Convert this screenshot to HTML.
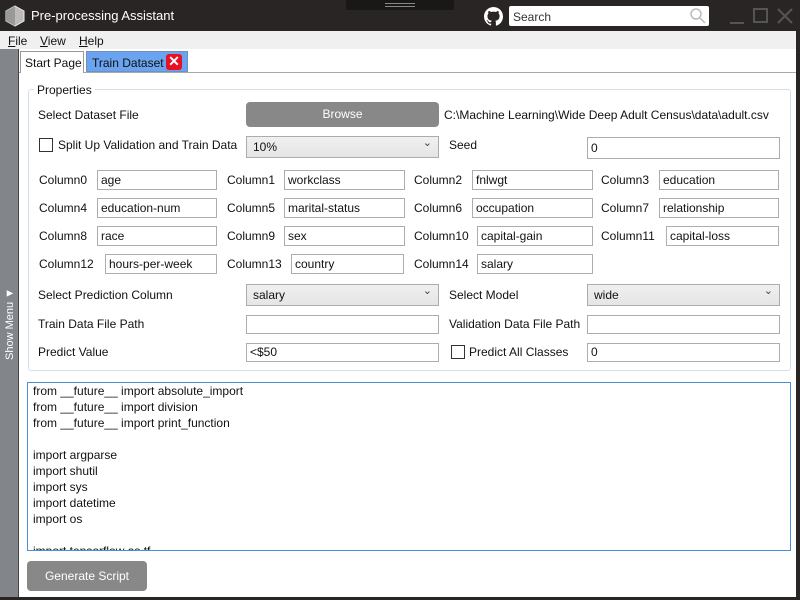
<!DOCTYPE html>
<html><head><meta charset="utf-8"><style>
*{box-sizing:border-box;margin:0;padding:0}
body{width:800px;height:600px;overflow:hidden;background:#fff;font-family:"Liberation Sans",sans-serif;font-size:12px;color:#111;position:relative}
div,span{position:absolute}
.l{white-space:nowrap;line-height:14px}
.i{border:1px solid #abadb3;background:#fff;height:20px;padding:2px 3px;line-height:14px;white-space:nowrap}
.c{border:1px solid #acacac;background:linear-gradient(#f0f0f0,#e5e5e5);height:22px;padding:3px 6px;line-height:14px}
.c:after{content:"⌄";position:absolute;right:6px;top:-1px;font-size:11px;color:#444}
.cb{width:14px;height:14px;border:1px solid #333;background:#fff}
</style></head><body>
<div style="left:0;top:0;width:800px;height:31px;background:#2a2525"></div>
<div style="left:346px;top:0;width:108px;height:10px;background:#1a1717"></div>
<div style="left:385px;top:3px;width:30px;height:1px;background:#888"></div>
<div style="left:385px;top:6px;width:30px;height:1px;background:#888"></div>
<svg style="position:absolute;left:4px;top:5px" width="22" height="22" viewBox="0 0 22 22"><polygon points="11,1 20,6 20,16 11,21 2,16 2,6" fill="#bbb" stroke="#eee" stroke-width="1"/><polygon points="11,1 11,21 2,16 2,6" fill="#999"/></svg>
<div class="l" style="left:31px;top:9px;color:#fff;font-size:13px">Pre-processing Assistant</div>
<svg style="position:absolute;left:484px;top:7px" width="19" height="19" viewBox="0 0 16 16"><path fill="#fff" d="M8 0C3.580 0 0 3.58 0 8c0 3.54 2.290 6.53 5.470 7.59.4.07.55-.17.55-.38v-1.33c-2.23.48-2.7-1.070-2.7-1.070-.36-.92-.89-1.17-.89-1.17-.73-.5.06-.49.06-.49.8.06 1.23.83 1.23.83.71 1.23 1.87.87 2.33.67.07-.52.28-.87.5-1.070-1.78-.2-3.64-.89-3.64-3.95 0-.87.31-1.59.82-2.15-.08-.2-.36-1.02.08-2.12 0 0 .67-.21 2.2.82a7.6 7.6 0 0 1 4 0c1.53-1.04 2.2-.82 2.2-.82.44 1.1.16 1.92.08 2.12.51.56.82 1.27.82 2.15 0 3.07-1.87 3.75-3.65 3.95.29.25.54.73.54 1.48v2.2c0 .21.15.46.55.38A8 8 0 0 0 16 8c0-4.42-3.58-8-8-8z"/></svg>
<div style="left:509px;top:6px;width:200px;height:20px;background:#fff;border-radius:2px"></div>
<div class="l" style="left:513px;top:10px;color:#333">Search</div>
<svg style="position:absolute;left:690px;top:8px" width="16" height="16"><circle cx="6" cy="6" r="5" fill="none" stroke="#bbb" stroke-width="1.5"/><line x1="10" y1="10" x2="15" y2="15" stroke="#bbb" stroke-width="1.5"/></svg>
<div style="left:730px;top:22px;width:14px;height:2px;background:#555"></div>
<div style="left:753px;top:8px;width:15px;height:15px;border:2px solid #555"></div>
<svg style="position:absolute;left:777px;top:8px" width="16" height="16"><path d="M1 1L15 15M15 1L1 15" stroke="#555" stroke-width="2"/></svg>
<div style="left:0;top:31px;width:800px;height:18px;background:#f0f0f0"></div>
<div class="l" style="left:8px;top:34px"><u>F</u>ile</div>
<div class="l" style="left:40px;top:34px"><u>V</u>iew</div>
<div class="l" style="left:79px;top:34px"><u>H</u>elp</div>
<div style="left:0;top:49px;width:19px;height:551px;background:#82868a;border-right:1px solid #444"></div>
<div class="l" style="left:-27px;top:316px;transform:rotate(-90deg);color:#fff;font-size:11px;width:74px">Show Menu ▼</div>
<div style="left:19px;top:72px;width:777px;height:1px;background:#aaa"></div>
<div style="left:20px;top:51px;width:64px;height:22px;border:1px solid #999;border-bottom:none;background:#fff"></div>
<div class="l" style="left:25px;top:56px">Start Page</div>
<div style="left:86px;top:51px;width:102px;height:21px;border:1px solid #6f8fc0;background:#6aa3ef"></div>
<div class="l" style="left:92px;top:56px">Train Dataset</div>
<div style="left:166px;top:54px;width:16px;height:16px;background:#e81123;border-radius:3px;color:#fff;font-size:14px;line-height:15px;text-align:center;font-weight:bold">✕</div>
<div style="left:796px;top:31px;width:4px;height:569px;background:#2a2525"></div>
<div style="left:0;top:597px;width:800px;height:3px;background:#2a2525"></div>
<div style="left:28px;top:89px;width:763px;height:282px;border:1px solid #d5dfe5;border-radius:3px"></div>
<div class="l" style="left:34px;top:83px;background:#fff;padding:0 3px">Properties</div>
<div class="l" style="left:38px;top:108px">Select Dataset File</div>
<div style="left:246px;top:102px;width:193px;height:25px;background:#888;border-radius:4px;color:#fff;text-align:center;line-height:25px">Browse</div>
<div class="l" style="left:444px;top:108px">C:\Machine Learning\Wide Deep Adult Census\data\adult.csv</div>
<div class="cb" style="left:39px;top:138px"></div>
<div class="l" style="left:58px;top:138px">Split Up Validation and Train Data</div>
<div class="c" style="left:246px;top:136px;width:193px">10%</div>
<div class="l" style="left:449px;top:138px">Seed</div>
<div class="i" style="left:587px;top:137px;width:193px;height:22px;padding-top:3px">0</div>
<div class="l" style="left:39px;top:173px">Column0</div><div class="i" style="left:97px;top:170px;width:120px">age</div>
<div class="l" style="left:227px;top:173px">Column1</div><div class="i" style="left:284px;top:170px;width:121px">workclass</div>
<div class="l" style="left:414px;top:173px">Column2</div><div class="i" style="left:472px;top:170px;width:121px">fnlwgt</div>
<div class="l" style="left:601px;top:173px">Column3</div><div class="i" style="left:659px;top:170px;width:120px">education</div>
<div class="l" style="left:39px;top:201px">Column4</div><div class="i" style="left:97px;top:198px;width:120px">education-num</div>
<div class="l" style="left:227px;top:201px">Column5</div><div class="i" style="left:284px;top:198px;width:121px">marital-status</div>
<div class="l" style="left:414px;top:201px">Column6</div><div class="i" style="left:472px;top:198px;width:121px">occupation</div>
<div class="l" style="left:601px;top:201px">Column7</div><div class="i" style="left:659px;top:198px;width:120px">relationship</div>
<div class="l" style="left:39px;top:229px">Column8</div><div class="i" style="left:97px;top:226px;width:120px">race</div>
<div class="l" style="left:227px;top:229px">Column9</div><div class="i" style="left:284px;top:226px;width:121px">sex</div>
<div class="l" style="left:414px;top:229px">Column10</div><div class="i" style="left:477px;top:226px;width:116px">capital-gain</div>
<div class="l" style="left:601px;top:229px">Column11</div><div class="i" style="left:666px;top:226px;width:113px">capital-loss</div>
<div class="l" style="left:39px;top:257px">Column12</div><div class="i" style="left:105px;top:254px;width:112px">hours-per-week</div>
<div class="l" style="left:227px;top:257px">Column13</div><div class="i" style="left:291px;top:254px;width:113px">country</div>
<div class="l" style="left:414px;top:257px">Column14</div><div class="i" style="left:477px;top:254px;width:116px">salary</div>
<div class="l" style="left:38px;top:288px">Select Prediction Column</div>
<div class="c" style="left:246px;top:284px;width:193px">salary</div>
<div class="l" style="left:449px;top:288px">Select Model</div>
<div class="c" style="left:587px;top:284px;width:193px">wide</div>
<div class="l" style="left:38px;top:317px">Train Data File Path</div>
<div class="i" style="left:246px;top:315px;width:193px;height:19px"></div>
<div class="l" style="left:449px;top:317px">Validation Data File Path</div>
<div class="i" style="left:587px;top:315px;width:193px;height:19px"></div>
<div class="l" style="left:38px;top:345px">Predict Value</div>
<div class="i" style="left:246px;top:343px;width:193px;height:19px;padding-top:1px">&lt;$50</div>
<div class="cb" style="left:451px;top:345px"></div>
<div class="l" style="left:469px;top:345px">Predict All Classes</div>
<div class="i" style="left:587px;top:343px;width:193px;height:19px;padding-top:1px">0</div>
<div style="left:27px;top:382px;width:764px;height:169px;border:1px solid #4a90d9;overflow:hidden">
<pre style="position:absolute;left:5px;top:0px;font-family:'Liberation Sans',sans-serif;font-size:12px;line-height:16px;color:#111">from __future__ import absolute_import
from __future__ import division
from __future__ import print_function

import argparse
import shutil
import sys
import datetime
import os

import tensorflow as tf</pre></div>
<div style="left:27px;top:561px;width:120px;height:30px;background:#888;border-radius:4px;color:#fff;text-align:center;line-height:30px">Generate Script</div>
</body></html>
